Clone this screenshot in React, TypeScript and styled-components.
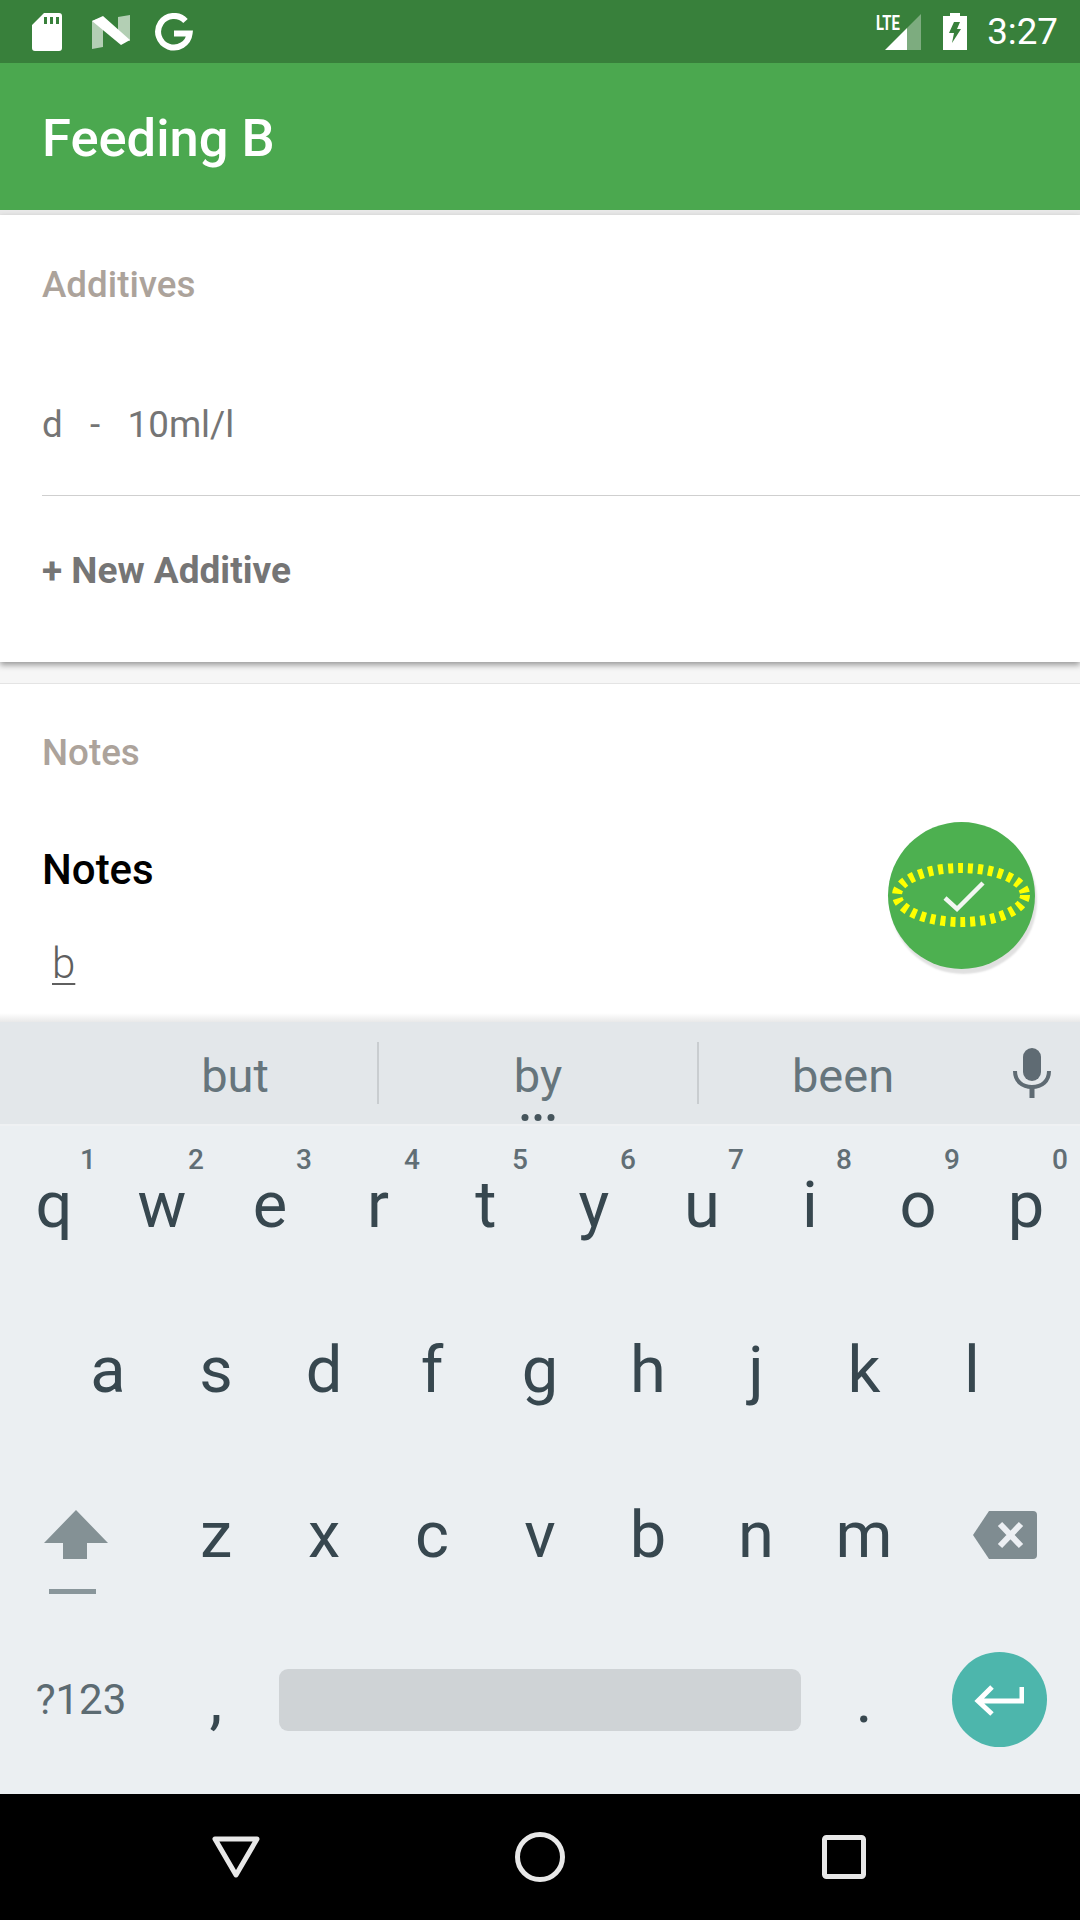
import React from "react";
import styled, { createGlobalStyle } from "styled-components";

const Global = createGlobalStyle`
  html, body { margin: 0; padding: 0; background: #fff; }
  body { font-family: Roboto, "Noto Sans", sans-serif; }
  #root { width: 1080px; height: 1920px; overflow: hidden; }
`;

const Screen = styled.div`
  position: relative;
  width: 1080px;
  height: 1920px;
  display: flex;
  flex-direction: column;
  background: #f6f6f6;
`;

const StatusBar = styled.div`
  height: 63px;
  background: #38803b;
  display: flex;
  align-items: center;
  padding: 0 22px 0 32px;
  color: #fff;
  flex: none;
`;
const StatusGroup = styled.div`
  display: flex;
  align-items: center;
`;
const Spacer = styled.div`
  flex: 1;
`;
const StatusIcon = styled.svg<{ $gap?: number }>`
  display: block;
  flex: none;
  margin-left: ${(p) => p.$gap ?? 0}px;
`;
const SignalWrap = styled.div`
  position: relative;
  width: 36px;
  height: 36px;
  flex: none;
`;
const Lte = styled.span`
  position: absolute;
  left: -9px;
  top: -1px;
  font-size: 20px;
  line-height: 20px;
  font-weight: 700;
  transform: scaleX(0.74);
  transform-origin: left top;
`;
const Clock = styled.span`
  font-size: 36.75px;
  line-height: 40px;
  margin-left: 20px;
  font-weight: 400;
`;

const AppBar = styled.div`
  height: 147px;
  background: #4ba84f;
  display: flex;
  align-items: center;
  padding: 3px 0 0 42px;
  color: #fff;
  font-size: 52.5px;
  font-weight: 500;
  flex: none;
  box-sizing: border-box;
`;

const TopEdge = styled.div`
  height: 5px;
  background: #e8e8e8;
  flex: none;
`;

const AdditivesCard = styled.section`
  height: 447px;
  flex: none;
  background: #fff;
  box-shadow: 0 3px 6px rgba(0, 0, 0, 0.38);
  position: relative;
  display: flex;
  flex-direction: column;
`;
const SectionTitle = styled.h2`
  margin: 0;
  padding-left: 42px;
  font-size: 36.75px;
  line-height: 40px;
  font-weight: 500;
  color: #aca39b;
`;
const AddTitleBox = styled.div`
  padding-top: 50px;
`;
const AdditiveRow = styled.div`
  margin: 100px 0 0 42px;
  padding-bottom: 50px;
  border-bottom: 1px solid #cfcfcf;
  display: flex;
  font-size: 36.75px;
  line-height: 40px;
  color: #757575;
  white-space: pre;
`;
const NewAdditive = styled.div`
  padding: 55px 0 0 42px;
  font-size: 37px;
  line-height: 40px;
  font-weight: 700;
  color: #757575;
`;

const NotesCard = styled.section`
  margin-top: 21px;
  height: 339px;
  flex: none;
  background: #fff;
  border-top: 1px solid #e4e4e4;
  box-sizing: border-box;
  padding-top: 49px;
  display: flex;
  flex-direction: column;
  position: relative;
`;
const NotesLabel = styled.div`
  margin: 75px 0 0 42px;
  font-size: 42px;
  line-height: 44px;
  font-weight: 500;
  color: #000;
`;
const NotesValue = styled.div`
  margin: 50px 0 0 52px;
  font-size: 42px;
  line-height: 44px;
  font-weight: 300;
  color: #5f5f5f;
  text-decoration: underline;
  text-decoration-thickness: 2px;
  text-underline-offset: 5px;
`;

const Fab = styled.button`
  position: absolute;
  left: 888px;
  top: 822px;
  width: 147px;
  height: 147px;
  border: 0;
  padding: 0;
  border-radius: 50%;
  background: #4db050;
  box-shadow: 2px 5px 2px rgba(0, 0, 0, 0.12);
  display: block;
`;

const KeyboardFade = styled.div`
  height: 9px;
  margin-top: -9px;
  position: relative;
  background: linear-gradient(to bottom, rgba(225, 225, 225, 0), #e9e9e9);
  flex: none;
`;
const Keyboard = styled.div`
  flex: none;
  background: #ebeff2;
  height: 772px;
  display: flex;
  flex-direction: column;
`;
const Suggestions = styled.div`
  height: 102px;
  background: #e3e7ea;
  display: grid;
  grid-template-columns: 286px 320px 288px 93px;
  padding-left: 93px;
  align-items: center;
  border-bottom: 2px solid #eff1f3;
  box-sizing: content-box;
  flex: none;
`;
const Suggestion = styled.div<{ $divider?: boolean }>`
  position: relative;
  height: 62px;
  padding-top: 4px;
  display: flex;
  align-items: center;
  justify-content: center;
  font-size: 47px;
  color: #66757c;
  border-right: ${(p) => (p.$divider ? "2px solid #c9cdd0" : "none")};
  box-sizing: border-box;
`;
const MoreDots = styled.span`
  position: absolute;
  left: 50%;
  bottom: -17px;
  transform: translateX(-50%);
  display: flex;
  gap: 6px;
`;
const Dot = styled.i`
  width: 7px;
  height: 7px;
  border-radius: 50%;
  background: #46555c;
  display: block;
`;
const MicCell = styled.div`
  display: flex;
  justify-content: center;
  align-items: center;
  padding-right: 4px;
`;
const KeyRow = styled.div`
  height: 165px;
  padding-bottom: 8px;
  box-sizing: border-box;
  display: flex;
  justify-content: center;
  flex: none;
`;
const Key = styled.div<{ $w?: number }>`
  position: relative;
  width: ${(p) => p.$w ?? 108}px;
  flex: none;
  display: flex;
  align-items: center;
  justify-content: center;
  font-size: 65px;
  color: #37474f;
`;
const Hint = styled.span`
  position: absolute;
  top: 18px;
  right: 12px;
  font-size: 28px;
  line-height: 32px;
  font-weight: 500;
  color: #616e75;
`;
const SymbolKey = styled(Key)`
  font-size: 42px;
  color: #5c6b72;
`;
const SpaceBar = styled.div`
  width: 522px;
  height: 62px;
  background: #cfd3d6;
  border-radius: 9px;
  flex: none;
`;
const SpaceCell = styled.div`
  width: 540px;
  flex: none;
  display: flex;
  justify-content: center;
  align-items: center;
`;
const EnterCircle = styled.div`
  width: 95px;
  height: 95px;
  border-radius: 50%;
  background: #4db6ac;
  display: flex;
  align-items: center;
  justify-content: center;
`;
const ShiftLine = styled.i`
  display: block;
  width: 47px;
  height: 5px;
  background: #89969b;
  margin: 30px 6px 0 0;
`;
const ShiftStack = styled.div`
  display: flex;
  flex-direction: column;
  align-items: center;
  margin: 35px 11px 0 0;
`;
const BackspaceIcon = styled.svg`
  display: block;
  margin-left: 11px;
`;

const NavBar = styled.div`
  height: 126px;
  background: #000;
  flex: none;
  display: grid;
  grid-template-columns: repeat(3, 304px);
  justify-content: center;
  align-items: center;
  justify-items: center;
`;

const rows1 = [
  ["q", "1"], ["w", "2"], ["e", "3"], ["r", "4"], ["t", "5"],
  ["y", "6"], ["u", "7"], ["i", "8"], ["o", "9"], ["p", "0"],
];

export default function App() {
  return (
    <Screen>
      <Global />
      <StatusBar>
        <StatusGroup>
          <StatusIcon width="30" height="38" viewBox="0 0 30 38">
            <path fill="#fff" fillRule="evenodd" d="M12 0H27a3 3 0 0 1 3 3V35a3 3 0 0 1-3 3H3a3 3 0 0 1-3-3V12ZM12 4V11H15V4ZM18 4V11H21V4ZM24 4V11H27V4Z" />
          </StatusIcon>
          <StatusIcon $gap={30} width="38" height="34" viewBox="0 0 38 34">
            <path fill="#fff" fillOpacity="0.62" d="M0 6 11 2V32L0 34Z" />
            <path fill="#fff" fillOpacity="0.62" d="M26 2 38 0V26L26 22Z" />
            <path fill="#fff" d="M0 6 11 1 38 25 29 30Z" />
          </StatusIcon>
          <StatusIcon $gap={25} width="38" height="38" viewBox="0 0 38 38">
            <path fill="none" stroke="#fff" strokeWidth="6" d="M30.5 8A15.8 15.8 0 1 0 34.6 20.5H19" />
          </StatusIcon>
        </StatusGroup>
        <Spacer />
        <StatusGroup>
          <SignalWrap>
            <Lte>LTE</Lte>
            <StatusIcon width="36" height="36" viewBox="0 0 36 36">
              <path fill="#fff" fillOpacity="0.35" d="M22 14 36 0V36H22Z" />
              <path fill="#fff" d="M0 36 22 14V36Z" />
            </StatusIcon>
          </SignalWrap>
          <StatusIcon $gap={22} width="24" height="37" viewBox="0 0 24 37">
            <path fill="#fff" fillRule="evenodd" d="M7 0H17V3H24V37H0V3H7ZM11 9H17L14 16H18L9 30 11 20H6Z" />
          </StatusIcon>
          <Clock>3:27</Clock>
        </StatusGroup>
      </StatusBar>

      <AppBar>Feeding B</AppBar>
      <TopEdge />

      <AdditivesCard>
        <AddTitleBox>
          <SectionTitle>Additives</SectionTitle>
        </AddTitleBox>
        <AdditiveRow>d   -   10ml/l</AdditiveRow>
        <NewAdditive>+ New Additive</NewAdditive>
      </AdditivesCard>

      <NotesCard>
        <SectionTitle>Notes</SectionTitle>
        <NotesLabel>Notes</NotesLabel>
        <NotesValue>b</NotesValue>
      </NotesCard>

      <KeyboardFade />
      <Keyboard>
        <Suggestions>
          <Suggestion $divider>but</Suggestion>
          <Suggestion $divider>
            by
            <MoreDots><Dot /><Dot /><Dot /></MoreDots>
          </Suggestion>
          <Suggestion>been</Suggestion>
          <MicCell>
            <svg width="38" height="50" viewBox="0 0 38 50">
              <rect x="10" y="0" width="18" height="33" rx="9" fill="#5f6b73" />
              <path d="M2 23C2 33 9 39 19 39S36 33 36 23" fill="none" stroke="#5f6b73" strokeWidth="4" />
              <rect x="16.5" y="38" width="5" height="12" fill="#5f6b73" />
            </svg>
          </MicCell>
        </Suggestions>

        <KeyRow>
          {rows1.map(([k, h]) => (
            <Key key={k}>
              {k}
              <Hint>{h}</Hint>
            </Key>
          ))}
        </KeyRow>
        <KeyRow>
          {"asdfghjkl".split("").map((k) => (
            <Key key={k}>{k}</Key>
          ))}
        </KeyRow>
        <KeyRow>
          <Key $w={162}>
            <ShiftStack>
              <svg width="64" height="49" viewBox="0 0 64 49">
                <path fill="#849195" d="M32 0 64 33H43V49H19V33H0Z" />
              </svg>
              <ShiftLine />
            </ShiftStack>
          </Key>
          {"zxcvbnm".split("").map((k) => (
            <Key key={k}>{k}</Key>
          ))}
          <Key $w={162}>
            <BackspaceIcon width="64" height="48" viewBox="0 0 64 48">
              <path fill="#7f8c91" d="M16 0H60a4 4 0 0 1 4 4V44a4 4 0 0 1-4 4H16L0 24Z" />
              <path stroke="#eceff3" strokeWidth="6" d="M27 13 48 35M48 13 27 35" />
            </BackspaceIcon>
          </Key>
        </KeyRow>
        <KeyRow>
          <SymbolKey $w={162}>?123</SymbolKey>
          <Key>,</Key>
          <SpaceCell>
            <SpaceBar />
          </SpaceCell>
          <Key>.</Key>
          <Key $w={162}>
            <EnterCircle>
              <svg width="50" height="32" viewBox="0 0 50 32">
                <path fill="none" stroke="#fff" strokeWidth="5" d="M48 3V17H5M18 3 4 17 18 30" />
              </svg>
            </EnterCircle>
          </Key>
        </KeyRow>
      </Keyboard>

      <NavBar>
        <svg width="48" height="42" viewBox="0 0 48 42">
          <path d="M3 3H45L24 39Z" fill="none" stroke="#e8e8e8" strokeWidth="5" strokeLinejoin="round" />
        </svg>
        <svg width="50" height="50" viewBox="0 0 50 50">
          <circle cx="25" cy="25" r="22.5" fill="none" stroke="#e8e8e8" strokeWidth="5" />
        </svg>
        <svg width="44" height="44" viewBox="0 0 44 44">
          <rect x="2.5" y="2.5" width="39" height="39" rx="2" fill="none" stroke="#e8e8e8" strokeWidth="5" />
        </svg>
      </NavBar>

      <Fab aria-label="Save">
        <svg width="147" height="147" viewBox="0 0 147 147">
          <ellipse cx="73" cy="73" rx="64" ry="27" fill="none" stroke="#ffff00" strokeWidth="10" strokeDasharray="5 5" />
          <path d="M57 76 69 87 95 61" fill="none" stroke="#f2f7f2" strokeWidth="4.5" />
        </svg>
      </Fab>
    </Screen>
  );
}
